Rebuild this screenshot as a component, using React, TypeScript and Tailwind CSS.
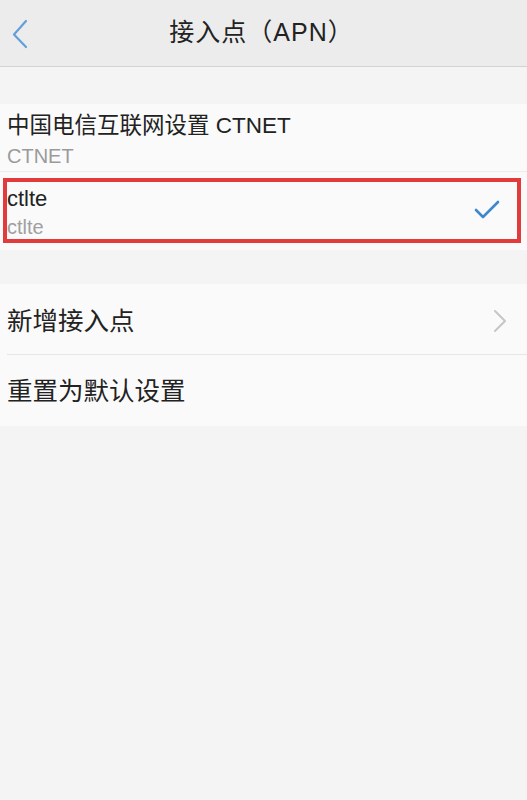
export default function App() {
  const font = { fontFamily: '"Liberation Sans", "Noto Sans CJK SC", sans-serif' };
  return (
    <div className="w-[527px] h-[800px] bg-[#f4f4f4] text-[#222]" style={font}>
      {/* header */}
      <div className="h-[67px] bg-[#ececec] border-b border-[#d2d2d2] grid grid-cols-[60px_1fr_60px] items-center">
        <div className="pl-[11px] pt-[1px]">
          <svg width="18" height="30" viewBox="0 0 18 30" fill="none">
            <path d="M15 2 L3 15.5 L15 28" stroke="#62a0da" strokeWidth="2.2" strokeLinecap="round" strokeLinejoin="round" />
          </svg>
        </div>
        <div className="text-center text-[25px] tracking-[1px] -ml-[4px]">接入点（APN）</div>
        <div />
      </div>

      <div className="h-[37px]" />

      {/* apn list */}
      <div className="bg-[#fafafa]">
        <div className="h-[68px] pl-[7px] flex flex-col justify-center border-b border-[#ececec]">
          <div className="text-[22.5px] leading-[30px] pt-[6px]">中国电信互联网设置 CTNET</div>
          <div className="text-[20px] leading-[30px] text-[#9a9a9a]">CTNET</div>
        </div>
        <div className="h-[78px] pt-[6px] pl-[3px] pr-[6px]">
          <div className="h-[65px] border-4 border-[#e23b3b] flex items-center justify-between">
            <div className="flex flex-col pt-[6px]">
              <div className="text-[22px] leading-[28px] -mt-[1px]">ctlte</div>
              <div className="text-[20px] leading-[28px] text-[#a0a0a0]">ctlte</div>
            </div>
            <svg width="28" height="22" viewBox="0 0 28 22" fill="none" className="mr-[16px] -mt-[2px]">
              <path d="M3 11 L10 18 L25 3" stroke="#3b89cc" strokeWidth="2.6" strokeLinecap="round" strokeLinejoin="round" />
            </svg>
          </div>
        </div>
      </div>

      <div className="h-[34px]" />

      {/* actions */}
      <div className="bg-[#fafafa]">
        <div className="h-[70px] pl-[7px] pr-[20px] flex items-center justify-between">
          <div className="text-[25.5px] pt-[4px]">新增接入点</div>
          <svg width="14" height="24" viewBox="0 0 14 24" fill="none" className="mt-[3px]">
            <path d="M2 2 L12 12 L2 22" stroke="#c6c6c6" strokeWidth="2" strokeLinecap="round" strokeLinejoin="round" />
          </svg>
        </div>
        <div className="ml-[7px] h-px bg-[#e6e6e6]" />
        <div className="h-[71px] pl-[7px] flex items-center">
          <div className="text-[25.5px] pt-[1px]">重置为默认设置</div>
        </div>
      </div>
    </div>
  );
}
